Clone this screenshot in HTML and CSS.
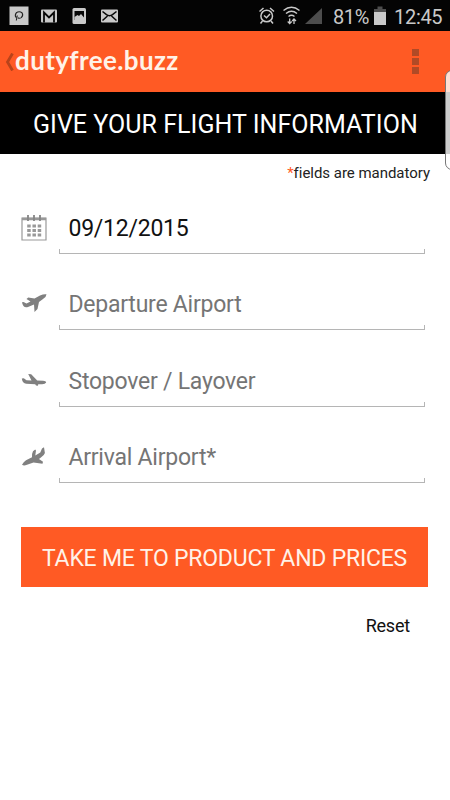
FILE: index.html
```html
<!DOCTYPE html>
<html lang="en">
<head>
<meta charset="utf-8">
<title>dutyfree.buzz</title>
<link rel="stylesheet" href="styles.css">
</head>
<body>
<div class="status">
  <svg class="notifications" width="130" height="31" viewBox="0 0 130 31">
    <rect x="9.500" y="6.500" width="19" height="18.500" fill="#c9c9c9"/>
    <path d="M16 17.500q-1.500-2.500.3-4.700 3-2 5.700 0 1.700 2.600-.7 4.800-2 1.200-3.300.2M17.300 15.500l-1 5" fill="none" stroke="#222" stroke-width="1.100"/>
    <rect x="41" y="9.500" width="16" height="13" rx="1" fill="#c9c9c9"/>
    <path d="M44 22.500v-10l5 5 5-5v10" fill="none" stroke="#080808" stroke-width="1.800"/>
    <rect x="72.500" y="8" width="13.500" height="16" rx="1.500" fill="#c9c9c9"/>
    <rect x="74.500" y="11" width="9.500" height="9" fill="#080808"/>
    <path d="M74.500 20v-3l3-2 1.500 1 2-2 3 3.500V20z" fill="#c9c9c9"/>
    <rect x="101" y="9.500" width="17" height="13" rx="1" fill="#c9c9c9"/>
    <path d="M102.500 11.500l4 3.200q3 2 6 0l4-3.200M102.500 20.500l5-4.500M116.500 20.500l-5-4.500" fill="none" stroke="#080808" stroke-width="1.500"/>
  </svg>
  <div class="system">
    <svg width="65" height="31" viewBox="258 0 65 31">
      <g fill="none" stroke="#c9c9c9" stroke-width="1.500">
        <circle cx="266.700" cy="16" r="5.800"/>
        <path d="M259.500 11.500l4-3.500M274 11.500l-4-3.500M262.500 21l-2 2.500M271 21l2 2.500M264 15.500l2.500 2.200 3.500-3.700"/>
        <path d="M283.500 10.500q8-6.500 16 0M286 13.500q5.500-4.500 11 0M288.500 16.500q3-2.300 6 0"/>
        <path d="M289.700 18.500v5M287.700 21.500l2 2 2-2M294 24v-5M292.200 21l1.800-2 2 2" stroke-width="1.300"/>
      </g>
      <path d="M322 8v16h-17z" fill="#4d4d4d"/>
    </svg>
    <span class="percent">81%</span>
    <svg class="battery" width="12" height="31" viewBox="0 0 12 31">
      <path d="M3.500 6.500h5V9H12v3H0V9h3.500z" fill="#4d4d4d"/>
      <path d="M0 12h12v13H0z" fill="#c9c9c9"/>
    </svg>
    <span class="clock">12:45</span>
  </div>
</div>
<header class="appbar">
  <svg class="back" width="9" height="18" viewBox="0 0 9 18"><path d="M7.500 0.500L2.500 9l5 8.500" fill="none" stroke="#b8431b" stroke-width="2.800"/></svg>
  <span class="logo">dutyfree.buzz</span>
  <div class="menu"><i></i><i></i><i></i></div>
</header>
<h1 class="title"><span>GIVE YOUR FLIGHT INFORMATION</span></h1>
<div class="edge-handle"></div>
<main>
  <p class="note"><b>*</b>fields are mandatory</p>
  <div class="row">
    <svg width="26" height="28" viewBox="0 0 26 28">
      <path d="M1 4h24v22H1z" fill="none" stroke="#999" stroke-width="1.200"/>
      <path d="M1 5h24" stroke="#999" stroke-width="2.500"/>
      <path d="M7 1v6M13 1v6M19 1v6" stroke="#858585" stroke-width="1.800"/>
      <path d="M6.200 12h14M6.200 16.500h14M6.200 21h14" stroke="#999" stroke-width="3" stroke-dasharray="3.500 1.750"/>
    </svg>
    <div class="field filled"><span>09/12/2015</span></div>
  </div>
  <div class="row">
    <svg width="26" height="28" viewBox="0 0 26 28">
      <path d="M1 12.200l1.500-.2 3 1.500 4-2-4-2.500 1.700-1.500 6.300 1 5.500-3q4-1.800 6.500-1.200 0 2.400-3.500 4.700l-4 3-1.500 7-3 3-.5-7.500L7 17q-5 1.500-6-4.800z" fill="#808080"/>
    </svg>
    <div class="field"><span>Departure Airport</span></div>
  </div>
  <div class="row">
    <svg width="26" height="28" viewBox="0 0 26 28">
      <path d="M.8 11.500l2-.2 2.700 2 5 .2-3.300-6.500 3 .3 6 6.200 6 .2q3 .3 3 1.800-1 1.500-4 1.700h-4l-.2 1.500-2-.2-.8-1.300-9-.4Q1.500 16.300.8 11.500z" fill="#808080"/>
    </svg>
    <div class="field"><span>Stopover / Layover</span></div>
  </div>
  <div class="row">
    <svg width="26" height="28" viewBox="0 0 26 28">
      <path d="M1 21.800q1.500-3 4-4.500l6-3q-.2-4 1-6l2.200-1.800.8 1-.7 5 5-3L21 5.500l2-1.200.9 5.700q-.7 2.500-4 4.500L18 16l4 2.800-.5 1.900-9-1.200-6.500 2.200q-3 1.300-5 .1z" fill="#808080"/>
    </svg>
    <div class="field"><span>Arrival Airport*</span></div>
  </div>
  <button class="submit"><span>TAKE ME TO PRODUCT AND PRICES</span></button>
  <div class="reset">Reset</div>
</main>
</body>
</html>
```

FILE: styles.css
```css
* { box-sizing: border-box; }
body {
  margin: 0;
  width: 450px;
  height: 800px;
  overflow: hidden;
  background: #fff;
  font-family: Roboto, "Liberation Sans", sans-serif;
  white-space: nowrap;
}
.status {
  height: 31px;
  background: #040404;
  color: #c9c9c9;
  display: flex;
  justify-content: space-between;
  font-size: 20px;
  line-height: 34px;
}
.status svg { flex: none; }
.system { display: flex; width: 192px; }
.percent { width: 41px; margin-left: 10px; letter-spacing: -0.4px; }
.clock { margin-left: 8px; letter-spacing: -0.3px; }
.appbar {
  height: 61px;
  background: #ff5a24;
  display: flex;
  align-items: center;
  padding: 0 31px 0 5px;
}
.back { flex: none; }
.logo {
  font: bold 26px/30px Lato, sans-serif;
  color: #fff2e8;
  letter-spacing: 0.38px;
  margin: -4px 0 0 1px;
}
.menu { margin-left: auto; display: grid; gap: 2px; }
.menu i { width: 7px; height: 7px; background: #b04a26; }
.title {
  height: 62px;
  margin: 0;
  padding-left: 33px;
  background: #000;
  color: #fff;
  font-size: 25px;
  font-weight: 400;
  letter-spacing: 0.04px;
  line-height: 65px;
}
.edge-handle {
  position: absolute;
  left: 445px;
  top: 70px;
  width: 14px;
  height: 100px;
  border: 1px solid #777;
  border-radius: 8px;
  background: rgba(255, 255, 255, 0.8);
}
main { padding: 0 22px 0 21px; }
.note {
  margin: 0 -2px 0 0;
  height: 33.5px;
  line-height: 38px;
  font-size: 15px;
  letter-spacing: -0.03px;
  color: #222;
  text-align: right;
}
.note b { color: #ff5a24; font-weight: 400; }
.row { display: flex; height: 76.5px; }
.row svg { flex: none; margin-top: 26px; }
.field {
  width: 366px;
  height: 66px;
  margin-left: 11.5px;
  padding-left: 10px;
  font-size: 23px;
  letter-spacing: -0.24px;
  line-height: 81px;
  color: #757575;
  border-bottom: 1px solid #b5b5b5;
  background:
    linear-gradient(#b5b5b5, #b5b5b5) left bottom / 1px 4px no-repeat,
    linear-gradient(#b5b5b5, #b5b5b5) right bottom / 1px 4px no-repeat;
}
.filled { color: #111; }
.submit {
  display: block;
  width: 407px;
  height: 60px;
  margin-top: 33.5px;
  padding: 2px 0 0 21px;
  border: 0;
  background: #ff5a24;
  color: #fff2e8;
  font: 23px Roboto, sans-serif;
  letter-spacing: -0.22px;
  text-align: left;
}
.reset {
  margin: 26px 18px 0 0;
  text-align: right;
  font-size: 18px;
  letter-spacing: -0.2px;
  line-height: 26px;
  color: #111;
}
```
